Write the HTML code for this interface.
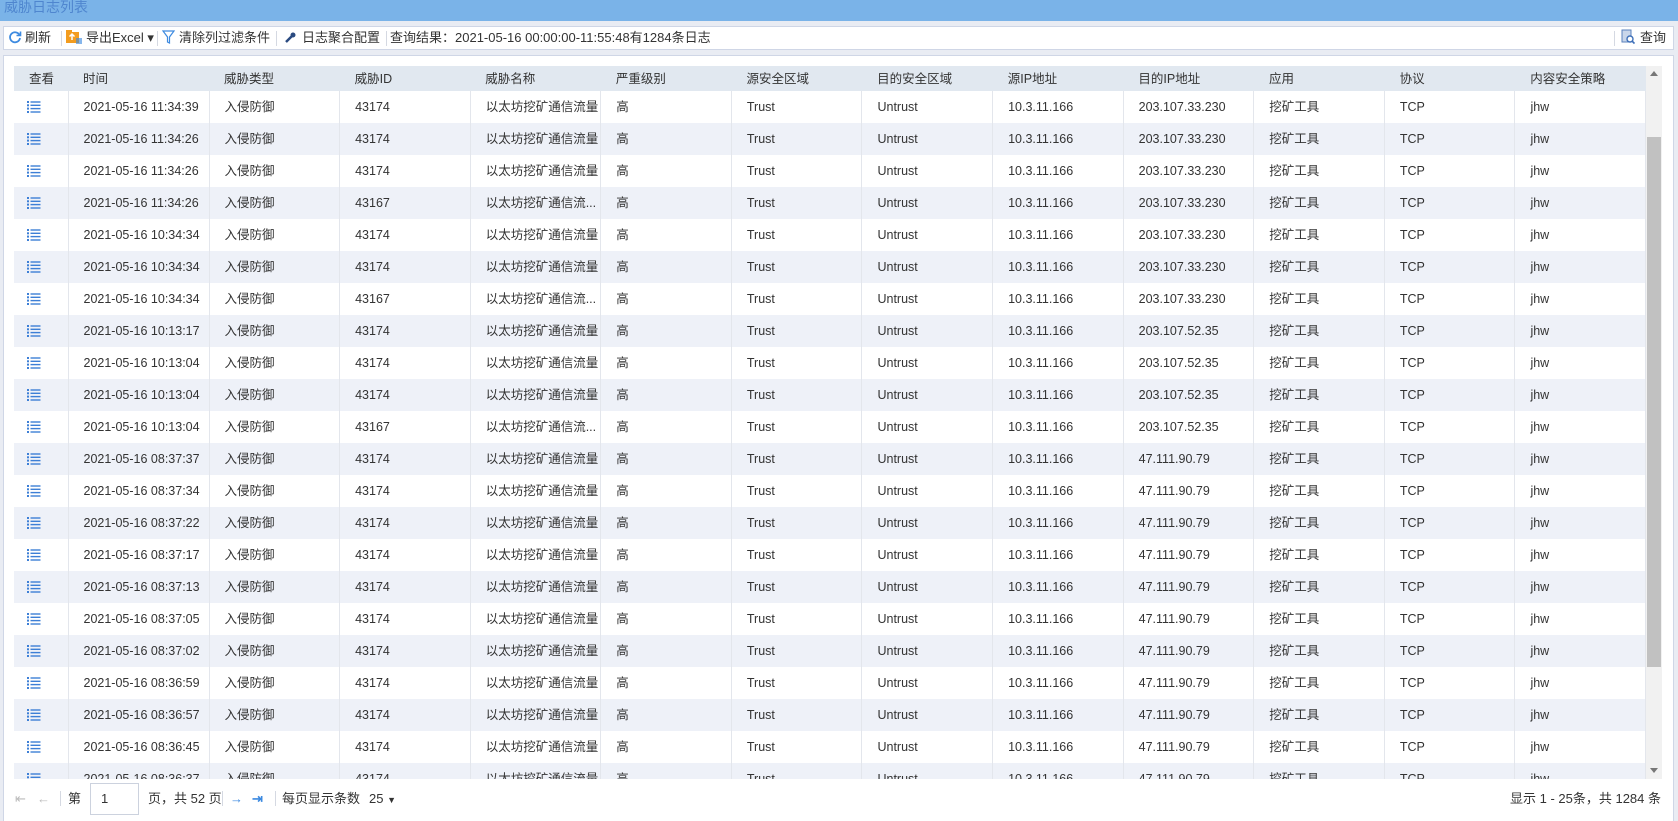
<!DOCTYPE html>
<html><head><meta charset="utf-8">
<style>
*{margin:0;padding:0;box-sizing:border-box}
body{width:1678px;height:821px;overflow:hidden;background:#e9ecf3;font-family:"Liberation Sans","Noto Sans CJK SC",sans-serif;font-size:13px;color:#333;position:relative}
#title{position:absolute;left:0;top:0;width:1678px;height:21px;background:#7ab3e8;color:#4f86cf;font-size:14px;line-height:14px;padding-left:4px}
#tb{position:absolute;left:3px;top:26px;width:1671px;height:24px;background:#fff;border:1px solid #cfd6e6;font-size:13px;line-height:22px;white-space:nowrap}
#tb span{position:absolute;top:0}
.sep{position:absolute;top:4px;width:1px;height:15px;background:#d5d9e2}
#panel{position:absolute;left:3px;top:55px;width:1671px;height:766px;background:#fff;border:1px solid #cfd6e6;border-bottom:none}
#grid{position:absolute;left:14px;top:66px;width:1632px;height:713px;overflow:hidden}
table{border-collapse:collapse;table-layout:fixed;width:1632px;font-size:12.5px}
td,th{height:32px;line-height:16px;padding-left:15px;text-align:left;vertical-align:middle;font-weight:normal;white-space:nowrap;overflow:hidden;border-right:1px solid #e3e6ec}
th{height:25px;background:#e1e8f0;border-right:none}
tr.a td{background:#eef1f8}
td.i{padding-left:13px;line-height:0}
#sb{position:absolute;left:1646px;top:66px;width:16px;height:713px;background:#f1f1f1}
#thumb{position:absolute;left:1647px;top:137px;width:14px;height:530px;background:#c1c1c1}
#pg{position:absolute;left:0;top:779px;width:1678px;height:42px;font-size:13px;line-height:32px}
#pg span{position:absolute;top:4px}
</style></head><body>
<div id="title">威胁日志列表</div>
<div id="tb">
<span style="left:4px;top:0"><svg width="14" height="14" viewBox="0 0 14 14" style="vertical-align:-2px"><path d="M11.5 5A5 5 0 1 0 12 8" fill="none" stroke="#3d8ae0" stroke-width="1.8"/><path d="M12.5 1.5v4h-4" fill="none" stroke="#3d8ae0" stroke-width="1.6"/></svg></span>
<span style="left:21px">刷新</span>
<div class="sep" style="left:57px"></div>
<span style="left:62px"><svg width="16" height="16" viewBox="0 0 16 16" style="vertical-align:-3px"><rect x="0" y="3" width="13" height="11" fill="#f39c1f"/><rect x="0" y="1" width="6" height="3" fill="#f39c1f"/><path d="M6 11V5M3.5 7.5L6 5l2.5 2.5" stroke="#fff" stroke-width="1.5" fill="none"/><path d="M10 10h6M10 12h6M10 14h6" stroke="#3d8ae0" stroke-width="1.2"/></svg></span>
<span style="left:82px">导出Excel ▾</span>
<div class="sep" style="left:153px"></div>
<span style="left:158px"><svg width="13" height="14" viewBox="0 0 13 14" style="vertical-align:-2px"><path d="M1 1h11L7.5 7v6l-2-1V7z" fill="none" stroke="#3d8ae0" stroke-width="1.2"/></svg></span>
<span style="left:175px">清除列过滤条件</span>
<div class="sep" style="left:272px"></div>
<span style="left:280px"><svg width="12" height="13" viewBox="0 0 12 13" style="vertical-align:-2px"><path d="M2 11L8 5" stroke="#2a4a80" stroke-width="2.5"/><circle cx="9" cy="4" r="2.5" fill="#2a4a80"/></svg></span>
<span style="left:298px">日志聚合配置</span>
<div class="sep" style="left:382px"></div>
<span style="left:386px">查询结果：2021-05-16 00:00:00-11:55:48有1284条日志</span>
<div class="sep" style="left:1610px"></div>
<span style="left:1617px"><svg width="14" height="16" viewBox="0 0 14 16" style="vertical-align:-3px"><rect x="1" y="1" width="9" height="12" fill="#c9d6ea" stroke="#5a82bd"/><circle cx="9" cy="10" r="3" fill="#fff" stroke="#3d6fb8" stroke-width="1.4"/><path d="M11 12l2.5 2.5" stroke="#3d6fb8" stroke-width="1.6"/></svg></span>
<span style="left:1636px">查询</span>
</div>
<div id="panel"></div>
<div id="grid"><table>
<colgroup><col style="width:54px"><col style="width:141px"><col span="11" style="width:130.6px"></colgroup>
<tr><th>查看</th><th>时间</th><th>威胁类型</th><th>威胁ID</th><th>威胁名称</th><th>严重级别</th><th>源安全区域</th><th>目的安全区域</th><th>源IP地址</th><th>目的IP地址</th><th>应用</th><th>协议</th><th>内容安全策略</th></tr>
</table><div id="rows"></div></div>
<div id="sb"></div><div id="thumb"></div>
<div style="position:absolute;left:1650px;top:71px;width:0;height:0;border-left:4px solid transparent;border-right:4px solid transparent;border-bottom:5px solid #777"></div>
<div style="position:absolute;left:1650px;top:768px;width:0;height:0;border-left:4px solid transparent;border-right:4px solid transparent;border-top:5px solid #777"></div>
<div id="pg">
<span style="left:15px;color:#bbb">⇤</span><span style="left:37px;color:#bbb">←</span>
<div class="sep" style="left:60px;top:12px"></div>
<span style="left:68px">第</span>
<div style="position:absolute;left:90px;top:4px;width:49px;height:32px;border:1px solid #ccd2de;background:#fff;padding-left:10px;line-height:30px">1</div>
<span style="left:148px">页，共 52 页</span>
<div class="sep" style="left:222px;top:12px"></div>
<span style="left:230px;color:#3d8ae0;font-weight:bold">→</span><span style="left:252px;color:#3d8ae0;font-weight:bold">⇥</span>
<div class="sep" style="left:275px;top:12px"></div>
<span style="left:282px">每页显示条数</span><span style="left:369px">25 <small style="font-size:9px">▼</small></span>
<span style="left:1510px">显示 1 - 25条，共 1284 条</span>
</div>
<script>
var d=[["11:34:39","43174","以太坊挖矿通信流量","203.107.33.230"],["11:34:26","43174","以太坊挖矿通信流量","203.107.33.230"],["11:34:26","43174","以太坊挖矿通信流量","203.107.33.230"],["11:34:26","43167","以太坊挖矿通信流...","203.107.33.230"],["10:34:34","43174","以太坊挖矿通信流量","203.107.33.230"],["10:34:34","43174","以太坊挖矿通信流量","203.107.33.230"],["10:34:34","43167","以太坊挖矿通信流...","203.107.33.230"],["10:13:17","43174","以太坊挖矿通信流量","203.107.52.35"],["10:13:04","43174","以太坊挖矿通信流量","203.107.52.35"],["10:13:04","43174","以太坊挖矿通信流量","203.107.52.35"],["10:13:04","43167","以太坊挖矿通信流...","203.107.52.35"],["08:37:37","43174","以太坊挖矿通信流量","47.111.90.79"],["08:37:34","43174","以太坊挖矿通信流量","47.111.90.79"],["08:37:22","43174","以太坊挖矿通信流量","47.111.90.79"],["08:37:17","43174","以太坊挖矿通信流量","47.111.90.79"],["08:37:13","43174","以太坊挖矿通信流量","47.111.90.79"],["08:37:05","43174","以太坊挖矿通信流量","47.111.90.79"],["08:37:02","43174","以太坊挖矿通信流量","47.111.90.79"],["08:36:59","43174","以太坊挖矿通信流量","47.111.90.79"],["08:36:57","43174","以太坊挖矿通信流量","47.111.90.79"],["08:36:45","43174","以太坊挖矿通信流量","47.111.90.79"],["08:36:37","43174","以太坊挖矿通信流量","47.111.90.79"]];
var ic='<svg width="14" height="12" viewBox="0 0 14 12"><g fill="#3d7fd6"><rect x="0" y="0" width="2" height="2"/><rect x="0" y="3.3" width="2" height="2"/><rect x="0" y="6.6" width="2" height="2"/><rect x="0" y="10" width="2" height="2"/><rect x="3.5" y="0.3" width="10" height="1.4"/><rect x="3.5" y="3.6" width="10" height="1.4"/><rect x="3.5" y="6.9" width="10" height="1.4"/><rect x="3.5" y="10.3" width="10" height="1.4"/></g></svg>';
var h='<table><colgroup><col style="width:54px"><col style="width:141px"><col span="11" style="width:130.6px"></colgroup>';
d.forEach(function(r,i){h+='<tr'+(i%2?' class="a"':'')+'><td class="i">'+ic+'</td><td>2021-05-16 '+r[0]+'</td><td>入侵防御</td><td>'+r[1]+'</td><td>'+r[2]+'</td><td>高</td><td>Trust</td><td>Untrust</td><td>10.3.11.166</td><td>'+r[3]+'</td><td>挖矿工具</td><td>TCP</td><td>jhw</td></tr>';});
document.getElementById('rows').innerHTML=h+'</table>';
</script>
</body></html>
